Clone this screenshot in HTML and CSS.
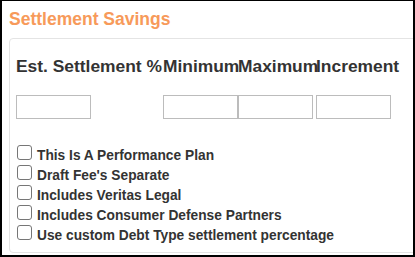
FILE: index.html
```html
<!DOCTYPE html>
<html>
<head>
<meta charset="utf-8">
<link rel="stylesheet" href="styles.css">
</head>
<body>
<div class="frame">
  <h2 class="title">Settlement Savings</h2>
  <div class="panel">
    <div class="grid">
      <div class="th">Est. Settlement %</div>
      <div class="th">Minimum</div>
      <div class="th">Maximum</div>
      <div class="th">Increment</div>
      <div class="td"><input class="field" type="text"></div>
      <div class="td"><input class="field" type="text"></div>
      <div class="td"><input class="field" type="text"></div>
      <div class="td"><input class="field" type="text"></div>
    </div>
    <div class="checks">
      <label class="check"><input type="checkbox" class="box">This Is A Performance Plan</label>
      <label class="check"><input type="checkbox" class="box">Draft Fee's Separate</label>
      <label class="check"><input type="checkbox" class="box">Includes Veritas Legal</label>
      <label class="check"><input type="checkbox" class="box">Includes Consumer Defense Partners</label>
      <label class="check"><input type="checkbox" class="box">Use custom Debt Type settlement percentage</label>
    </div>
  </div>
</div>
</body>
</html>
```

FILE: styles.css
```css
html, body {
  margin: 0;
  padding: 0;
  background: #fff;
}
.frame {
  width: 415px;
  height: 257px;
  box-sizing: border-box;
  border-style: solid;
  border-color: #000;
  border-width: 1px 2px 2px 2px;
  overflow: hidden;
  font-family: "Liberation Sans", Arial, sans-serif;
}
.title {
  margin: 8px 0 0 7px;
  font-size: 17.5px;
  line-height: 20px;
  font-weight: bold;
  color: #f79a5a;
}
.panel {
  margin: 9px -30px 0 7px;
  border: 1px solid #e4e4e4;
  border-radius: 4px;
  padding: 17px 0 7px 6px;
}
.grid {
  display: grid;
  grid-template-columns: 147px 75px 78px 90px;
  row-gap: 19px;
  white-space: nowrap;
}
.th {
  font-size: 17.4px;
  line-height: 20px;
  font-weight: bold;
  color: #333;
}
.td {
  height: 24px;
}
.field {
  display: block;
  box-sizing: border-box;
  width: 75px;
  height: 24px;
  margin: 0;
  border: 1px solid #bcbcbc;
  border-radius: 0;
  padding: 0;
  background: #fff;
}
.checks {
  margin-top: 26px;
}
.check {
  display: block;
  font-size: 13.75px;
  line-height: 19px;
  font-weight: bold;
  color: #333;
  white-space: nowrap;
}
.box {
  -webkit-appearance: none;
  appearance: none;
  display: inline-block;
  box-sizing: border-box;
  width: 15px;
  height: 15px;
  margin: 0 5px 0 1px;
  border: 1px solid #767676;
  border-radius: 3px;
  background: #fff;
  vertical-align: baseline;
}
```
